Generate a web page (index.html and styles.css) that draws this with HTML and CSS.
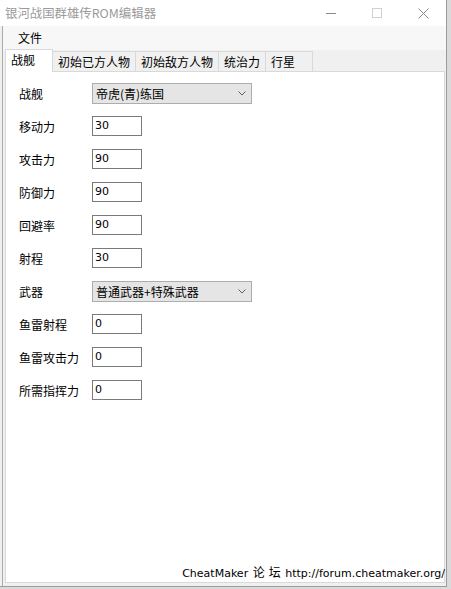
FILE: index.html
```html
<!DOCTYPE html>
<html lang="zh">
<head>
<meta charset="utf-8">
<title>银河战国群雄传ROM编辑器</title>
<link rel="stylesheet" href="styles.css">
</head>
<body>
<div class="window">
  <div class="titlebar">
    <span class="title">银河战国群雄传ROM编辑器</span>
    <div class="controls">
      <span class="ctl"><svg width="10" height="10" viewBox="0 0 10 10"><path d="M0 5.5H10" stroke="#8a8a8a" stroke-width="1"/></svg></span>
      <span class="ctl"><svg width="10" height="10" viewBox="0 0 10 10"><rect x="0.5" y="0.5" width="9" height="9" fill="none" stroke="#d0d0d0" stroke-width="1"/></svg></span>
      <span class="ctl"><svg width="11" height="11" viewBox="0 0 11 11"><path d="M0.5 0.5L10.5 10.5M10.5 0.5L0.5 10.5" stroke="#8a8a8a" stroke-width="1"/></svg></span>
    </div>
  </div>
  <div class="frame">
    <div class="menubar"><span class="menu-item">文件</span></div>
    <div class="client">
      <div class="tabs">
        <div class="tab active">战舰</div>
        <div class="tab">初始已方人物</div>
        <div class="tab">初始敌方人物</div>
        <div class="tab">统治力</div>
        <div class="tab">行星</div>
      </div>
      <div class="panel">
        <div class="form">
          <span class="label">战舰</span>
          <div class="combo"><span>帝虎(青)练国</span><svg width="8" height="5" viewBox="0 0 8 5"><path d="M0.5 0.5L4 4L7.5 0.5" fill="none" stroke="#606060" stroke-width="1"/></svg></div>
          <span class="label">移动力</span>
          <div class="field">30</div>
          <span class="label">攻击力</span>
          <div class="field">90</div>
          <span class="label">防御力</span>
          <div class="field">90</div>
          <span class="label">回避率</span>
          <div class="field">90</div>
          <span class="label">射程</span>
          <div class="field">30</div>
          <span class="label">武器</span>
          <div class="combo"><span>普通武器+特殊武器</span><svg width="8" height="5" viewBox="0 0 8 5"><path d="M0.5 0.5L4 4L7.5 0.5" fill="none" stroke="#606060" stroke-width="1"/></svg></div>
          <span class="label">鱼雷射程</span>
          <div class="field">0</div>
          <span class="label">鱼雷攻击力</span>
          <div class="field">0</div>
          <span class="label">所需指挥力</span>
          <div class="field">0</div>
        </div>
        <div class="footer">CheatMaker <span class="cjk">论坛</span> http://forum.cheatmaker.org/</div>
      </div>
    </div>
  </div>
</div>
</body>
</html>
```
FILE: styles.css
```css
html, body {
  margin: 0;
  padding: 0;
  height: 100%;
}
body {
  background: #dadada;
  font-family: "Noto Sans CJK SC", "Liberation Sans", sans-serif;
  font-size: 12px;
  color: #000;
}
.window {
  width: 447px;
  height: 587px;
  box-sizing: border-box;
  display: flex;
  flex-direction: column;
  background: #f0f0f0;
  border-right: 1px solid #9c9c9c;
  border-bottom: 1px solid #9c9c9c;
}
.titlebar {
  height: 26px;
  flex: none;
  display: flex;
  align-items: center;
  background: #fff;
}
.title {
  flex: 1;
  padding-left: 5px;
  color: #9a9a9a;
  font-size: 12.4px;
  line-height: 26px;
  white-space: nowrap;
}
.controls {
  display: flex;
  height: 26px;
}
.ctl {
  width: 46px;
  display: flex;
  align-items: center;
  justify-content: center;
}
.frame {
  flex: 1;
  display: flex;
  flex-direction: column;
  margin-left: 2px;
  border-left: 1px solid #ababab;
}
.menubar {
  height: 24px;
  flex: none;
  display: flex;
  align-items: center;
  padding-left: 15px;
  background: #f7f7f7;
}
.menu-item {
  line-height: 20px;
}
.client {
  flex: 1;
  display: flex;
  flex-direction: column;
  padding: 0 1px 3px 2px;
  background: #f0f0f0;
}
.tabs {
  height: 21px;
  flex: none;
  display: flex;
  align-items: flex-end;
  position: relative;
  z-index: 1;
}
.tab {
  height: 19px;
  line-height: 19px;
  min-width: 36px;
  padding: 0 5px;
  border: 1px solid #d9d9d9;
  border-bottom: none;
  background: #f0f0f0;
  margin-left: -1px;
  white-space: nowrap;
}
.tab.active {
  height: 22px;
  line-height: 20px;
  margin-left: 0;
  margin-bottom: -1px;
  background: #fff;
  border-color: #d9d9d9;
}
.panel {
  flex: 1;
  display: flex;
  flex-direction: column;
  background: #fff;
  border: 1px solid #d9d9d9;
}
.form {
  display: grid;
  grid-template-columns: 73px auto;
  grid-auto-rows: 21px;
  row-gap: 12px;
  padding: 11px 0 0 13px;
  justify-items: start;
  align-items: center;
}
.label {
  white-space: nowrap;
  line-height: 16px;
}
.field {
  align-self: start;
  width: 50px;
  height: 20px;
  box-sizing: border-box;
  border: 1px solid #7a7a7a;
  padding: 0 2px;
  font-family: "DejaVu Sans", sans-serif;
  font-size: 11px;
  line-height: 17px;
  background: #fff;
}
.combo {
  width: 160px;
  height: 21px;
  box-sizing: border-box;
  border: 1px solid #adadad;
  background: #e5e5e5;
  display: flex;
  align-items: center;
  justify-content: space-between;
  padding: 0 5px 0 3px;
  line-height: 17px;
}
.footer {
  margin-top: auto;
  margin-right: -1px;
  padding-bottom: 1px;
  text-align: right;
  font-family: "DejaVu Sans", sans-serif;
  font-size: 11px;
  line-height: 14px;
  white-space: nowrap;
}
.footer .cjk {
  font-family: "Noto Sans CJK SC", sans-serif;
  font-size: 12px;
  letter-spacing: 4px;
  margin-left: 1px;
  margin-right: -3px;
}
```
